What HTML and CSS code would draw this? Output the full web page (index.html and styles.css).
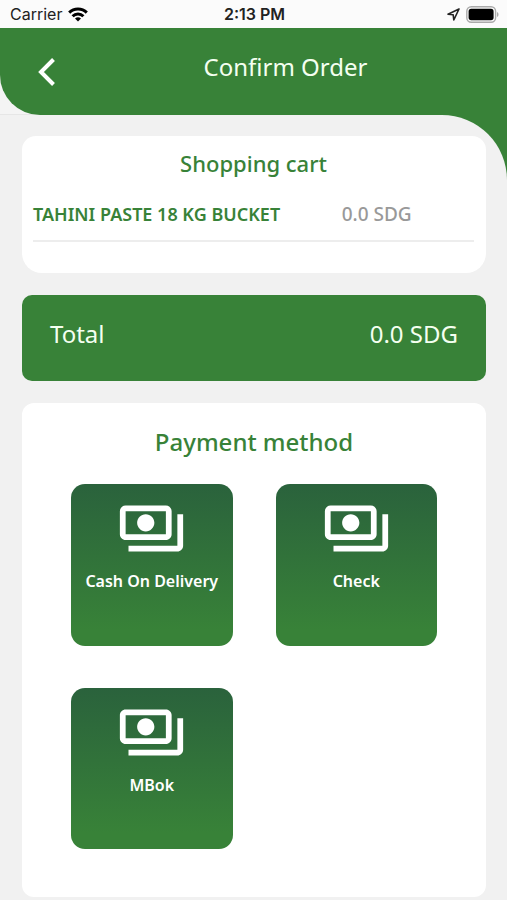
FILE: index.html
```html
<!DOCTYPE html>
<html lang="en">
<head>
<meta charset="utf-8">
<meta name="viewport" content="width=device-width, initial-scale=1">
<title>Confirm Order</title>
<link rel="stylesheet" href="styles.css">
</head>
<body>
<svg class="defs" width="0" height="0" aria-hidden="true">
  <symbol id="payments" viewBox="0 0 24 24">
    <path d="M19 14V6c0-1.1-.9-2-2-2H3c-1.1 0-2 .9-2 2v8c0 1.1.9 2 2 2h14c1.1 0 2-.9 2-2zm-2 0H3V6h14v8zm-7-7c-1.66 0-3 1.34-3 3s1.34 3 3 3 3-1.34 3-3-1.34-3-3-3zm13 0v11c0 1.1-.9 2-2 2H4v-2h17V7h2z"/>
  </symbol>
</svg>
<div class="status">
  <div class="status-left">
    <span>Carrier</span>
    <svg width="20" height="15" viewBox="0 0 20 15" aria-hidden="true">
      <g fill="none" stroke="#000" stroke-width="3">
        <path d="M1.2 5.6a12.5 12.5 0 0 1 17.6 0"/>
        <path d="M4.6 9.2a7.6 7.6 0 0 1 10.8 0"/>
      </g>
      <path d="M10 14.6l-3-3a4.3 4.3 0 0 1 6 0z"/>
    </svg>
  </div>
  <time class="clock">2:13 PM</time>
  <div class="status-right">
    <svg width="13" height="13" viewBox="0 0 13 13" aria-hidden="true">
      <path d="M12 1L1 6.2l5.2.6.6 5.2z" fill="none" stroke="#222" stroke-width="1.6" stroke-linejoin="round"/>
    </svg>
    <svg width="33" height="17" viewBox="0 0 33 17" aria-hidden="true">
      <rect x=".8" y=".8" width="28.8" height="15.4" rx="4.5" fill="none" stroke="#aaa" stroke-width="1.4"/>
      <rect x="2.6" y="2.8" width="25" height="11.4" rx="2.6"/>
      <path d="M31 6v5c2-.8 2-4.200 0-5z" fill="#aaa"/>
    </svg>
  </div>
</div>
<div class="header-wrap">
  <header class="header">
    <button class="back" type="button" aria-label="Back">
      <svg width="18" height="28" viewBox="0 0 18 28" aria-hidden="true"><path d="M15.500 1.500L3 14l12.500 12.500" fill="none" stroke="#fff" stroke-width="4"/></svg>
    </button>
    <h1 class="title">Confirm Order</h1>
  </header>
</div>
<div class="main-wrap">
  <main class="main">
    <section class="card cart">
      <h2 class="cart-title">Shopping cart</h2>
      <div class="item">
        <span class="item-name">TAHINI PASTE 18 KG BUCKET</span>
        <span class="item-price">0.0 SDG</span>
      </div>
    </section>
    <section class="total">
      <span>Total</span>
      <span>0.0 SDG</span>
    </section>
    <section class="card payment">
      <h2 class="payment-title">Payment method</h2>
      <div class="methods">
        <button class="method" type="button"><svg class="method-icon" aria-hidden="true"><use href="#payments"/></svg><span>Cash On Delivery</span></button>
        <button class="method" type="button"><svg class="method-icon" aria-hidden="true"><use href="#payments"/></svg><span>Check</span></button>
        <button class="method" type="button"><svg class="method-icon" aria-hidden="true"><use href="#payments"/></svg><span>MBok</span></button>
      </div>
    </section>
  </main>
</div>
</body>
</html>
```
FILE: styles.css
```css
* {
  box-sizing: border-box;
}

body {
  margin: 0;
  background: #f1f1f1;
  font-family: "Noto Sans", sans-serif;
}

h1,
h2 {
  margin: 0;
}

button {
  border: 0;
  padding: 0;
  font-family: inherit;
  cursor: pointer;
}

svg {
  display: block;
}

.defs {
  position: absolute;
}

.status {
  display: grid;
  grid-template-columns: 1fr auto 1fr;
  align-items: center;
  height: 28px;
  padding: 0 8px 0 10px;
  background: #fbfbfb;
  color: #222;
  font: 16px/28px Inter, sans-serif;
}

.status-left,
.status-right {
  display: flex;
  align-items: center;
  gap: 6px;
}

.status-right {
  justify-content: flex-end;
}

.clock {
  font-weight: 600;
}

.header-wrap {
  background: #f4f4f4;
  border-bottom: 1px solid #e6e6e6;
}

.header {
  display: grid;
  grid-template-columns: 64px 1fr;
  height: 87px;
  margin-bottom: -1px;
  background: #388238;
  border-bottom-left-radius: 40px;
}

.back {
  display: flex;
  align-items: center;
  justify-content: flex-end;
  padding-right: 8px;
  background: none;
}

.title {
  padding-top: 19px;
  color: #f4fff0;
  font-size: 24px;
  line-height: 40px;
  font-weight: 400;
  text-align: center;
}

.main-wrap {
  background: #388238;
}

.main {
  display: grid;
  gap: 22px;
  padding: 21px 21px 3px 22px;
  background: #f1f1f1;
  border-top-right-radius: 65px;
}

.card {
  background: #fff;
  border-radius: 12px;
}

.cart {
  padding: 11px 12px 31px 11px;
  border-radius: 14px 14px 20px 20px;
}

.cart-title {
  color: #388238;
  font-size: 22px;
  line-height: 32px;
  font-weight: 500;
  text-align: center;
}

.item {
  display: grid;
  grid-template-columns: 7fr 3fr;
  height: 63px;
  padding-top: 19px;
  border-bottom: 2px solid #ededed;
  line-height: 32px;
}

.item-name {
  color: #388238;
  font-size: 18px;
  font-weight: 600;
}

.item-price {
  color: #999;
  font-size: 19px;
  font-weight: 500;
}

.total {
  display: flex;
  justify-content: space-between;
  height: 86px;
  padding: 19px 28px;
  border-radius: 10px;
  background: #388238;
  color: #f4fff0;
  font-size: 24px;
  line-height: 40px;
}

.payment {
  padding: 19px 49px 48px;
}

.payment-title {
  color: #388238;
  font-size: 24px;
  line-height: 40px;
  font-weight: 500;
  text-align: center;
}

.methods {
  display: grid;
  grid-template-columns: 1fr 1fr;
  gap: 42px 43px;
  margin-top: 22px;
}

.method {
  display: flex;
  flex-direction: column;
  align-items: center;
  aspect-ratio: 1;
  padding-top: 10px;
  border-radius: 14px;
  background: linear-gradient(#2a623c, #388238 90%);
  color: #fff;
  font-size: 16px;
  line-height: 24px;
  font-weight: 600;
  white-space: nowrap;
}

.method-icon {
  width: 69px;
  height: 69px;
  margin-bottom: 6px;
  fill: #fff;
}
```
